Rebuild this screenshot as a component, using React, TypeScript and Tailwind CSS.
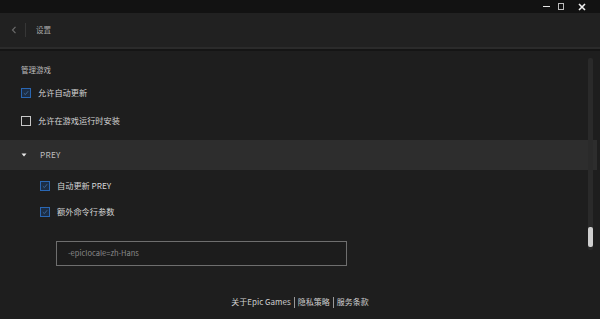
import { ReactNode } from "react";

const font = { fontFamily: '"Noto Sans CJK SC", "Noto Sans", sans-serif' };

function Box({ checked }: { checked: boolean }) {
  if (!checked) {
    return <div className="h-[10px] w-[10px] shrink-0 border-[1.5px] border-[#c8c8c8]" />;
  }
  return (
    <div className="flex h-[10px] w-[10px] shrink-0 items-center justify-center border-[1.5px] border-[#2a67b3] bg-[#1c2d44]">
      <svg width="6" height="6" viewBox="0 0 6 6">
        <path d="M0.8 3.2 L2.4 4.6 L5.2 1.2" stroke="#3f6c9e" strokeWidth="0.9" fill="none" />
      </svg>
    </div>
  );
}

function Row({ checked, children, className }: { checked: boolean; children: ReactNode; className?: string }) {
  return (
    <div className={"flex h-[14px] items-center gap-[7px] " + (className ?? "")}>
      <Box checked={checked} />
      <span className="text-[8.2px] leading-none text-[#d4d4d4]">{children}</span>
    </div>
  );
}

export default function App() {
  return (
    <div className="flex h-[319px] w-[600px] flex-col bg-[#1e1e1e]" style={font}>
      {/* title bar */}
      <div className="flex h-[13px] shrink-0 items-center justify-end gap-[8px] bg-[#121212] pr-[12px]">
        <div className="h-[1.5px] w-[7px] bg-[#e6e6e6]" />
        <div className="h-[7px] w-[6px] border border-[#bdbdbd]" />
        <svg width="12" height="8" viewBox="0 0 12 8" className="ml-[4px]">
          <path d="M3 1 L9 7 M9 1 L3 7" stroke="#f0f0f0" strokeWidth="1.6" />
        </svg>
      </div>

      {/* header */}
      <div className="flex h-[34px] shrink-0 items-center bg-[#212121]">
        <svg width="6" height="8" viewBox="0 0 6 8" className="ml-[11px]">
          <path d="M4.5 0.8 L1.5 4 L4.5 7.2" stroke="#6a6a6a" strokeWidth="1.2" fill="none" />
        </svg>
        <div className="ml-[8px] h-[14px] w-px bg-[#363636]" />
        <span className="ml-[10px] text-[7.5px] text-[#a8a8a8]">设置</span>
      </div>
      <div className="h-[2px] shrink-0 bg-[#2b2b2b]" />
      <div className="h-[2px] shrink-0 bg-[#151515]" />

      {/* body */}
      <div className="relative flex-1">
        <div className="pl-[21px] pt-[15px]">
          <div className="text-[7.5px] leading-none text-[#bdbdbd]">管理游戏</div>
          <Row checked className="mt-[12px]">允许自动更新</Row>
          <Row checked={false} className="mt-[14px]">允许在游戏运行时安装</Row>
        </div>

        <div className="mt-[12px] mr-[3px] flex h-[30px] items-center bg-[#2d2d2d]">
          <svg width="6" height="4" viewBox="0 0 6 4" className="ml-[21px]">
            <path d="M0.5 0.5 L5.5 0.5 L3 3.5 Z" fill="#e8e8e8" />
          </svg>
          <span className="ml-[13px] text-[8.2px] tracking-[0.3px] text-[#bdbdbd]">PREY</span>
        </div>

        <div className="pl-[40px] pt-[9px]">
          <Row checked>自动更新 PREY</Row>
          <Row checked className="mt-[12px]">额外命令行参数</Row>
          <div className="ml-[16px] mt-[22px] flex h-[25px] w-[291px] items-center border-[1.5px] border-[#6e6e6e] bg-[#1c1c1c] pl-[11px]">
            <span className="text-[7.5px] text-[#8a8a8a]">-epiclocale=zh-Hans</span>
          </div>
        </div>

        {/* scrollbar */}
        <div className="absolute right-[7px] top-[7px] h-[192px] w-[5px] rounded-[2px] bg-[#2a2a2a]">
          <div className="absolute bottom-[3px] left-0 h-[20px] w-[5px] rounded-[2px] bg-[#cfcfcf]" />
        </div>
      </div>

      {/* footer */}
      <div className="flex h-[34px] shrink-0 items-center justify-center gap-[3px] text-[8px] text-[#cfcfcf]">
        <span>关于Epic Games</span>
        <span className="h-[11px] w-px bg-[#9a9a9a]" />
        <span>隐私策略</span>
        <span className="h-[11px] w-px bg-[#9a9a9a]" />
        <span>服务条款</span>
      </div>
    </div>
  );
}
